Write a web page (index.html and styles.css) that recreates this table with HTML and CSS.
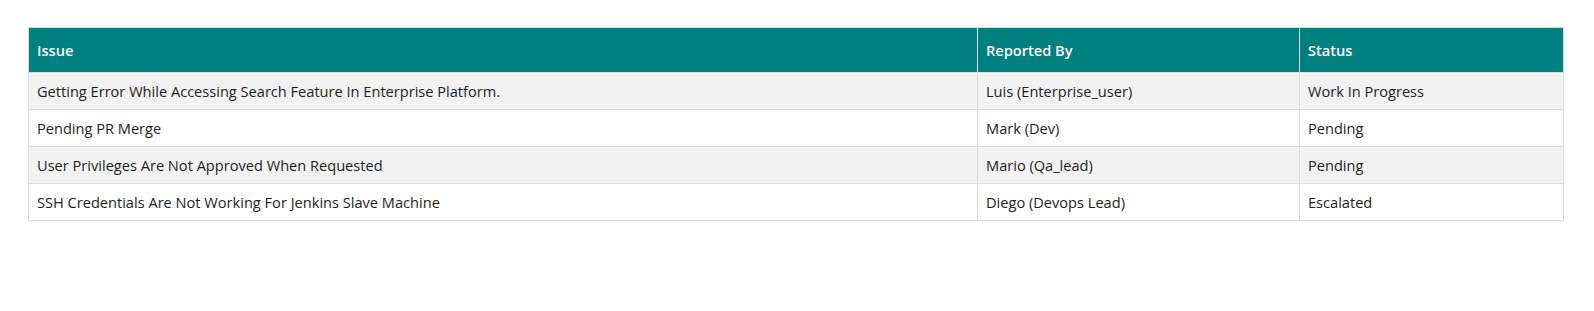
FILE: index.html
```html
<!DOCTYPE html>
<html lang="en">
<head>
<meta charset="utf-8">
<title>Issues</title>
<link rel="stylesheet" href="styles.css">
</head>
<body>
<div class="wrap">
  <table class="issues">
    <colgroup>
      <col class="c-issue">
      <col class="c-rep">
      <col class="c-status">
    </colgroup>
    <thead>
      <tr><th>Issue</th><th>Reported By</th><th>Status</th></tr>
    </thead>
    <tbody>
      <tr><td>Getting Error While Accessing Search Feature In Enterprise Platform.</td><td>Luis (Enterprise_user)</td><td>Work In Progress</td></tr>
      <tr><td>Pending PR Merge</td><td>Mark (Dev)</td><td>Pending</td></tr>
      <tr><td>User Privileges Are Not Approved When Requested</td><td>Mario (Qa_lead)</td><td>Pending</td></tr>
      <tr><td>SSH Credentials Are Not Working For Jenkins Slave Machine</td><td>Diego (Devops Lead)</td><td>Escalated</td></tr>
    </tbody>
  </table>
</div>
</body>
</html>
```
FILE: styles.css
```css
html, body {
  margin: 0;
  padding: 0;
  background: #ffffff;
}
body {
  font-family: "Open Sans", "Noto Sans", sans-serif;
  font-size: 14.6px;
  color: #1e1e1e;
}
.wrap {
  padding: 27px 30px 0 28px;
}
.issues {
  width: 100%;
  border-collapse: collapse;
  table-layout: fixed;
}
.c-issue { width: 949px; }
.c-rep { width: 322px; }
.c-status { width: auto; }
.issues th,
.issues td {
  border: 1px solid #dddddd;
  text-align: left;
  line-height: 20px;
  padding: 8px 8px;
  white-space: nowrap;
}
.issues th {
  background: #008080;
  color: #ffffff;
  font-weight: 600;
  padding: 12px 8px;
}
.issues tbody tr:nth-child(odd) {
  background: #f2f2f2;
}
```
